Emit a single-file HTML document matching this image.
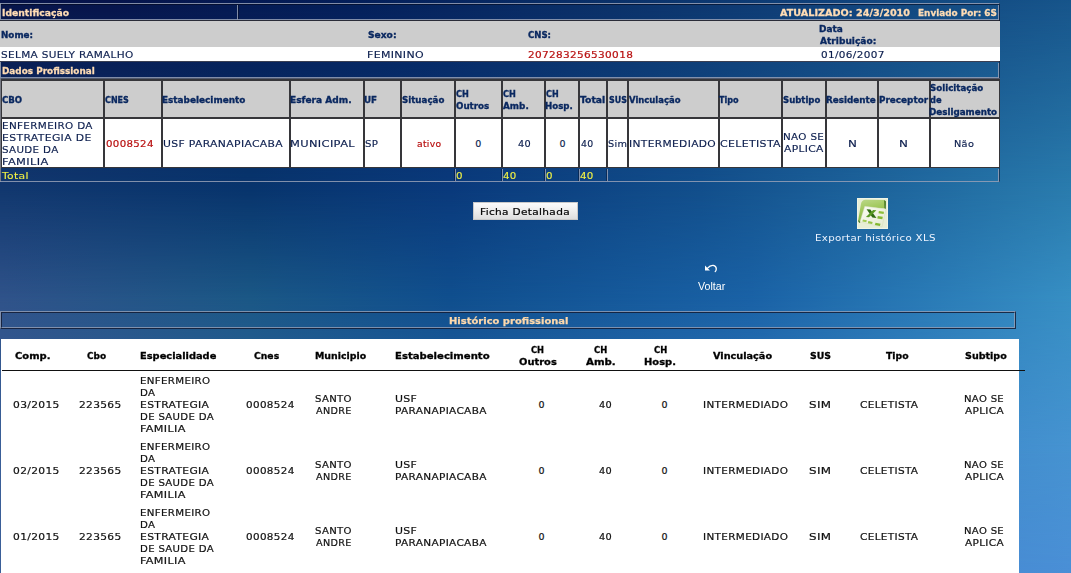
<!DOCTYPE html>
<html lang="pt-BR"><head><meta charset="utf-8"><title>Histórico profissional</title>
<style>
html,body{margin:0;padding:0}
body{width:1071px;height:573px;overflow:hidden;position:relative;background:#0d2f74}
.x{position:absolute;display:block}
.bg{left:0;top:0;width:1071px;height:573px}
.t{position:absolute;white-space:pre;line-height:12px;transform-origin:0 0}
.r{font-family:'DejaVu Sans','Liberation Sans',sans-serif;font-size:9.5px;font-weight:400;color:#0b1d4d;-webkit-text-stroke:0.15px #0b1d4d}
.rr{font-family:'DejaVu Sans','Liberation Sans',sans-serif;font-size:9.5px;font-weight:400;color:#b81010;-webkit-text-stroke:0.2px #b81010}
.ry{font-family:'DejaVu Sans','Liberation Sans',sans-serif;font-size:9.5px;font-weight:400;color:#f2f244;-webkit-text-stroke:0.1px #f2f244}
.rk{font-family:'DejaVu Sans','Liberation Sans',sans-serif;font-size:9.5px;font-weight:400;color:#000;-webkit-text-stroke:0.2px #000}
.rw{font-family:'DejaVu Sans','Liberation Sans',sans-serif;font-size:9.5px;font-weight:400;color:#eef4ff}
.k{font-family:'DejaVu Sans','Liberation Sans',sans-serif;font-size:9.5px;font-weight:400;color:#111;-webkit-text-stroke:0.2px #111}
.ub{font-family:'DejaVu Sans','Liberation Sans',sans-serif;font-size:9.5px;font-weight:700;color:#0a2860;-webkit-text-stroke:0.35px #0a2860}
.up{font-family:'DejaVu Sans','Liberation Sans',sans-serif;font-size:9.5px;font-weight:700;color:#ffdcb4;-webkit-text-stroke:0.3px #ffdcb4}
.lb{font-family:'DejaVu Sans','Liberation Sans',sans-serif;font-size:9.5px;font-weight:700;color:#000;-webkit-text-stroke:0.3px #000}
.lp{font-family:'DejaVu Sans','Liberation Sans',sans-serif;font-size:9.5px;font-weight:700;color:#ffd9ac;-webkit-text-stroke:0.25px #ffd9ac}
.ar{font-family:'Liberation Sans',Arial,sans-serif;font-size:11.5px;font-weight:400;color:#fff}
</style></head><body>
<div class="x bg" style="background:linear-gradient(to right,#07144a 0.00%,#07154c 10.27%,#05205b 33.61%,#0b3169 56.96%,#11437c 79.37%,#17558b 100.00%)"></div>
<div class="x bg" style="background:linear-gradient(to right,#12386f 0.00%,#08356d 23.34%,#0a3a7c 42.02%,#124f8c 65.36%,#2a7cae 100.00%);-webkit-mask-image:linear-gradient(to bottom,transparent 0.00%,#000 33.16%);mask-image:linear-gradient(to bottom,transparent 0.00%,#000 33.16%)"></div>
<div class="x bg" style="background:linear-gradient(to right,#30538a 0.00%,#1b5886 23.34%,#104f8e 42.02%,#1a62a6 70.03%,#378fc4 100.00%);-webkit-mask-image:linear-gradient(to bottom,transparent 33.16%,#000 52.36%);mask-image:linear-gradient(to bottom,transparent 33.16%,#000 52.36%)"></div>
<div class="x bg" style="background:linear-gradient(to right,#3a5f98 0.00%,#2a66a8 42.02%,#357ac0 70.03%,#4693d1 100.00%);-webkit-mask-image:linear-gradient(to bottom,transparent 52.36%,#000 78.53%);mask-image:linear-gradient(to bottom,transparent 52.36%,#000 78.53%)"></div>
<div class="x bg" style="background:linear-gradient(to right,#3a5f98 0.00%,#3f80c8 70.03%,#4a8fd6 100.00%);-webkit-mask-image:linear-gradient(to bottom,transparent 78.53%,#000 100.00%);mask-image:linear-gradient(to bottom,transparent 78.53%,#000 100.00%)"></div>
<div class="x" style="left:0px;top:3px;width:1000px;height:1px;background:rgba(150,160,182,.85);"></div>
<div class="x" style="left:0px;top:3px;width:1px;height:18px;background:rgba(150,158,176,.9);"></div>
<div class="x" style="left:1px;top:4px;width:998px;height:1px;background:rgba(4,8,28,.6);"></div>
<div class="x" style="left:1px;top:19px;width:998px;height:1px;background:rgba(150,160,182,.85);"></div>
<div class="x" style="left:0px;top:20px;width:1000px;height:1px;background:#2a2c38;"></div>
<div class="x" style="left:237px;top:5px;width:1px;height:15px;background:rgba(150,160,182,.85);"></div>
<div class="x" style="left:238px;top:5px;width:1px;height:14px;background:rgba(4,8,28,.5);"></div>
<div class="x" style="left:998px;top:5px;width:1px;height:15px;background:rgba(150,160,182,.85);"></div>
<div class="x" style="left:999px;top:3px;width:1px;height:18px;background:rgba(4,8,28,.5);"></div>
<div class="x" style="left:0px;top:21px;width:1000px;height:26px;background:#cdcdcd;"></div>
<div class="x" style="left:0px;top:47px;width:1000px;height:14px;background:#ffffff;"></div>
<div class="x" style="left:0px;top:61px;width:1000px;height:1px;background:#3a3f52;"></div>
<div class="x" style="left:0px;top:62px;width:1px;height:16px;background:rgba(150,158,176,.9);"></div>
<div class="x" style="left:1px;top:77px;width:998px;height:1px;background:rgba(150,160,182,.85);"></div>
<div class="x" style="left:998px;top:63px;width:1px;height:15px;background:rgba(150,160,182,.85);"></div>
<div class="x" style="left:999px;top:61px;width:1px;height:18px;background:rgba(4,8,28,.5);"></div>
<div class="x" style="left:0px;top:78px;width:1000px;height:1px;background:#50586c;"></div>
<div class="x" style="left:0px;top:79px;width:1000px;height:2px;background:#36363a;"></div>
<div class="x" style="left:0px;top:80px;width:104px;height:39px;background:#36363a;"></div>
<div class="x" style="left:2px;top:81px;width:101px;height:36px;background:#cdcdcd;"></div>
<div class="x" style="left:103px;top:80px;width:59px;height:39px;background:#36363a;"></div>
<div class="x" style="left:105px;top:81px;width:56px;height:36px;background:#cdcdcd;"></div>
<div class="x" style="left:161px;top:80px;width:129px;height:39px;background:#36363a;"></div>
<div class="x" style="left:163px;top:81px;width:126px;height:36px;background:#cdcdcd;"></div>
<div class="x" style="left:289px;top:80px;width:75px;height:39px;background:#36363a;"></div>
<div class="x" style="left:291px;top:81px;width:72px;height:36px;background:#cdcdcd;"></div>
<div class="x" style="left:363px;top:80px;width:38px;height:39px;background:#36363a;"></div>
<div class="x" style="left:365px;top:81px;width:35px;height:36px;background:#cdcdcd;"></div>
<div class="x" style="left:400px;top:80px;width:55px;height:39px;background:#36363a;"></div>
<div class="x" style="left:402px;top:81px;width:52px;height:36px;background:#cdcdcd;"></div>
<div class="x" style="left:454px;top:80px;width:48px;height:39px;background:#36363a;"></div>
<div class="x" style="left:456px;top:81px;width:45px;height:36px;background:#cdcdcd;"></div>
<div class="x" style="left:501px;top:80px;width:44px;height:39px;background:#36363a;"></div>
<div class="x" style="left:503px;top:81px;width:41px;height:36px;background:#cdcdcd;"></div>
<div class="x" style="left:544px;top:80px;width:35px;height:39px;background:#36363a;"></div>
<div class="x" style="left:546px;top:81px;width:32px;height:36px;background:#cdcdcd;"></div>
<div class="x" style="left:578px;top:80px;width:29px;height:39px;background:#36363a;"></div>
<div class="x" style="left:580px;top:81px;width:26px;height:36px;background:#cdcdcd;"></div>
<div class="x" style="left:606px;top:80px;width:22px;height:39px;background:#36363a;"></div>
<div class="x" style="left:608px;top:81px;width:19px;height:36px;background:#cdcdcd;"></div>
<div class="x" style="left:627px;top:80px;width:92px;height:39px;background:#36363a;"></div>
<div class="x" style="left:629px;top:81px;width:89px;height:36px;background:#cdcdcd;"></div>
<div class="x" style="left:718px;top:80px;width:64px;height:39px;background:#36363a;"></div>
<div class="x" style="left:720px;top:81px;width:61px;height:36px;background:#cdcdcd;"></div>
<div class="x" style="left:781px;top:80px;width:45px;height:39px;background:#36363a;"></div>
<div class="x" style="left:783px;top:81px;width:42px;height:36px;background:#cdcdcd;"></div>
<div class="x" style="left:825px;top:80px;width:53px;height:39px;background:#36363a;"></div>
<div class="x" style="left:827px;top:81px;width:50px;height:36px;background:#cdcdcd;"></div>
<div class="x" style="left:877px;top:80px;width:53px;height:39px;background:#36363a;"></div>
<div class="x" style="left:879px;top:81px;width:50px;height:36px;background:#cdcdcd;"></div>
<div class="x" style="left:929px;top:80px;width:71px;height:39px;background:#36363a;"></div>
<div class="x" style="left:931px;top:81px;width:68px;height:36px;background:#cdcdcd;"></div>
<div class="x" style="left:0px;top:118px;width:104px;height:50px;background:#36363a;"></div>
<div class="x" style="left:2px;top:119px;width:101px;height:48px;background:#ffffff;"></div>
<div class="x" style="left:103px;top:118px;width:59px;height:50px;background:#36363a;"></div>
<div class="x" style="left:105px;top:119px;width:56px;height:48px;background:#ffffff;"></div>
<div class="x" style="left:161px;top:118px;width:129px;height:50px;background:#36363a;"></div>
<div class="x" style="left:163px;top:119px;width:126px;height:48px;background:#ffffff;"></div>
<div class="x" style="left:289px;top:118px;width:75px;height:50px;background:#36363a;"></div>
<div class="x" style="left:291px;top:119px;width:72px;height:48px;background:#ffffff;"></div>
<div class="x" style="left:363px;top:118px;width:38px;height:50px;background:#36363a;"></div>
<div class="x" style="left:365px;top:119px;width:35px;height:48px;background:#ffffff;"></div>
<div class="x" style="left:400px;top:118px;width:55px;height:50px;background:#36363a;"></div>
<div class="x" style="left:402px;top:119px;width:52px;height:48px;background:#ffffff;"></div>
<div class="x" style="left:454px;top:118px;width:48px;height:50px;background:#36363a;"></div>
<div class="x" style="left:456px;top:119px;width:45px;height:48px;background:#ffffff;"></div>
<div class="x" style="left:501px;top:118px;width:44px;height:50px;background:#36363a;"></div>
<div class="x" style="left:503px;top:119px;width:41px;height:48px;background:#ffffff;"></div>
<div class="x" style="left:544px;top:118px;width:35px;height:50px;background:#36363a;"></div>
<div class="x" style="left:546px;top:119px;width:32px;height:48px;background:#ffffff;"></div>
<div class="x" style="left:578px;top:118px;width:29px;height:50px;background:#36363a;"></div>
<div class="x" style="left:580px;top:119px;width:26px;height:48px;background:#ffffff;"></div>
<div class="x" style="left:606px;top:118px;width:22px;height:50px;background:#36363a;"></div>
<div class="x" style="left:608px;top:119px;width:19px;height:48px;background:#ffffff;"></div>
<div class="x" style="left:627px;top:118px;width:92px;height:50px;background:#36363a;"></div>
<div class="x" style="left:629px;top:119px;width:89px;height:48px;background:#ffffff;"></div>
<div class="x" style="left:718px;top:118px;width:64px;height:50px;background:#36363a;"></div>
<div class="x" style="left:720px;top:119px;width:61px;height:48px;background:#ffffff;"></div>
<div class="x" style="left:781px;top:118px;width:45px;height:50px;background:#36363a;"></div>
<div class="x" style="left:783px;top:119px;width:42px;height:48px;background:#ffffff;"></div>
<div class="x" style="left:825px;top:118px;width:53px;height:50px;background:#36363a;"></div>
<div class="x" style="left:827px;top:119px;width:50px;height:48px;background:#ffffff;"></div>
<div class="x" style="left:877px;top:118px;width:53px;height:50px;background:#36363a;"></div>
<div class="x" style="left:879px;top:119px;width:50px;height:48px;background:#ffffff;"></div>
<div class="x" style="left:929px;top:118px;width:71px;height:50px;background:#36363a;"></div>
<div class="x" style="left:931px;top:119px;width:68px;height:48px;background:#ffffff;"></div>
<div class="x" style="left:0px;top:78px;width:1px;height:104px;background:#777a84;"></div>
<div class="x" style="left:0px;top:181px;width:1000px;height:1px;background:rgba(150,160,182,.85);"></div>
<div class="x" style="left:455px;top:169px;width:1px;height:12px;background:rgba(150,160,182,.85);"></div>
<div class="x" style="left:454px;top:169px;width:1px;height:12px;background:rgba(4,8,28,.4);"></div>
<div class="x" style="left:502px;top:169px;width:1px;height:12px;background:rgba(150,160,182,.85);"></div>
<div class="x" style="left:501px;top:169px;width:1px;height:12px;background:rgba(4,8,28,.4);"></div>
<div class="x" style="left:545px;top:169px;width:1px;height:12px;background:rgba(150,160,182,.85);"></div>
<div class="x" style="left:544px;top:169px;width:1px;height:12px;background:rgba(4,8,28,.4);"></div>
<div class="x" style="left:579px;top:169px;width:1px;height:12px;background:rgba(150,160,182,.85);"></div>
<div class="x" style="left:578px;top:169px;width:1px;height:12px;background:rgba(4,8,28,.4);"></div>
<div class="x" style="left:607px;top:169px;width:1px;height:12px;background:rgba(150,160,182,.85);"></div>
<div class="x" style="left:606px;top:169px;width:1px;height:12px;background:rgba(4,8,28,.4);"></div>
<div class="x" style="left:998px;top:169px;width:1px;height:12px;background:rgba(150,160,182,.85);"></div>
<div class="x" style="left:999px;top:168px;width:1px;height:14px;background:rgba(4,8,28,.5);"></div>
<div class="x" style="left:473px;top:202px;width:105px;height:18px;box-sizing:border-box;border:1px solid #c9c9c9;background:linear-gradient(#fbfbfb,#efefef 45%,#dedede);"></div>
<svg class="x" style="left:857px;top:198px" width="31" height="31" viewBox="0 0 31 31">
<defs><linearGradient id="g1" x1="0" y1="0" x2="0.25" y2="1"><stop offset="0" stop-color="#bcd98a"/><stop offset=".45" stop-color="#a3c95e"/><stop offset="1" stop-color="#86b53e"/></linearGradient>
<linearGradient id="g2" x1="0" y1="0" x2="1" y2="1"><stop offset="0" stop-color="#fbfcf4"/><stop offset="1" stop-color="#e4ead0"/></linearGradient></defs>
<rect width="31" height="31" fill="#e7eed6"/>
<rect x=".5" y=".5" width="30" height="30" fill="none" stroke="#f1f5e6" stroke-width="1"/>
<path d="M3.9 6.2 Q4.6 1.8 8.6 1.7 L27.2 1.9 L27.4 10.6 L8 9 L3.6 23.6 L1.2 22.2 Z" fill="url(#g1)"/>
<path d="M27.1 1.9 L28.9 3.2 L28.8 11.3 L27.3 10.4 Z" fill="#47791b"/>
<path d="M1.1 22.1 L3.5 23.5 L2.9 25 L1.5 24 Z" fill="#3f6f18"/>
<path d="M7.8 8.3 L28.9 11.1 L25 29 L3 23.7 Z" fill="url(#g2)" stroke="#d3dcba" stroke-width=".5"/>
<path d="M9.6 11.2 L13.4 11.6 L19.4 20 L15.4 19.6 Z" fill="#2f6a12"/>
<path d="M16.2 11.9 L19.4 12.3 L12 19.3 L8.9 18.9 Z" fill="#5a9a22"/>
<path d="M21.9 13 L27 13.7 L26.6 16 L21.5 15.3 Z" fill="#8dbf3a"/>
<path d="M20.8 18 L25.8 18.8 L25.3 21.3 L20.3 20.5 Z" fill="#84b932"/>
<path d="M5.9 21.5 L9.8 22.3 L9.3 24.2 L5.4 23.4 Z" fill="#a3cb55"/>
<path d="M11.4 23.1 L15.6 24 L15.1 26.1 L10.9 25.2 Z" fill="#94c243"/>
<path d="M18.5 24.7 L23.5 25.8 L22.9 28.1 L17.9 27 Z" fill="#82b830"/>
</svg>
<svg class="x" style="left:704px;top:264px" width="14" height="9" viewBox="0 0 14 9">
<path d="M1 1.6 L1 6.6 L6 6.6 L4.1 4.7 Z" fill="#fff"/>
<path d="M3.6 4.2 Q6 1.2 9.2 1.4 Q12.4 2 12.3 5 Q12.2 6.6 11.2 7.6" fill="none" stroke="#fff" stroke-width="1.3" stroke-linecap="round"/>
</svg>
<div class="x" style="left:0;top:311px;width:1016px;height:18px;box-sizing:border-box;border:1px solid;border-color:rgba(150,160,182,.8) rgba(20,28,52,.85) rgba(20,28,52,.85) rgba(150,160,182,.8)"></div>
<div class="x" style="left:1px;top:312px;width:1014px;height:16px;box-sizing:border-box;border:1px solid;border-color:rgba(20,28,52,.85) rgba(150,160,182,.8) rgba(150,160,182,.8) rgba(20,28,52,.85)"></div>
<div class="x" style="left:1px;top:339px;width:1018px;height:240px;background:#ffffff;"></div>
<div class="x" style="left:2px;top:370px;width:1023px;height:1px;background:#111;"></div>
<span class="t up" style="left:2.0px;top:7px;transform:scaleX(0.971)">Identificação</span>
<span class="t up" style="left:780.0px;top:7px;transform:scaleX(1.016)">ATUALIZADO: 24/3/2010</span>
<span class="t up" style="left:917.8px;top:7px;transform:scaleX(0.934)">Enviado Por: 6S</span>
<span class="t ub" style="left:0.6px;top:29px;transform:scaleX(0.924)">Nome:</span>
<span class="t ub" style="left:367.8px;top:29px;transform:scaleX(0.959)">Sexo:</span>
<span class="t ub" style="left:528.0px;top:29px;transform:scaleX(0.900)">CNS:</span>
<span class="t ub" style="left:819.3px;top:23px;transform:scaleX(0.942)">Data</span>
<span class="t ub" style="left:820.2px;top:35px;transform:scaleX(0.953)">Atribuição:</span>
<span class="t r" style="left:0.9px;top:49px;letter-spacing:0.30px;transform:scaleX(1.106)">SELMA SUELY RAMALHO</span>
<span class="t r" style="left:367.2px;top:49px;letter-spacing:0.30px;transform:scaleX(1.154)">FEMININO</span>
<span class="t rr" style="left:527.9px;top:49px;letter-spacing:0.30px;transform:scaleX(1.105)">207283256530018</span>
<span class="t r" style="left:820.5px;top:49px;letter-spacing:0.30px;transform:scaleX(1.102)">01/06/2007</span>
<span class="t up" style="left:2.1px;top:65px;transform:scaleX(0.934)">Dados Profissional</span>
<span class="t ub" style="left:2.1px;top:94px;transform:scaleX(0.905)">CBO</span>
<span class="t ub" style="left:105.0px;top:94px;transform:scaleX(0.843)">CNES</span>
<span class="t ub" style="left:161.7px;top:94px;transform:scaleX(0.936)">Estabelecimento</span>
<span class="t ub" style="left:289.8px;top:94px;transform:scaleX(0.951)">Esfera Adm.</span>
<span class="t ub" style="left:364.1px;top:94px;transform:scaleX(0.923)">UF</span>
<span class="t ub" style="left:402.0px;top:94px;transform:scaleX(0.913)">Situação</span>
<span class="t ub" style="left:455.9px;top:88px;transform:scaleX(0.857)">CH</span>
<span class="t ub" style="left:455.9px;top:100px;transform:scaleX(0.917)">Outros</span>
<span class="t ub" style="left:503.1px;top:88px;transform:scaleX(0.857)">CH</span>
<span class="t ub" style="left:503.1px;top:100px;transform:scaleX(0.933)">Amb.</span>
<span class="t ub" style="left:546.2px;top:88px;transform:scaleX(0.843)">CH</span>
<span class="t ub" style="left:545.1px;top:100px;transform:scaleX(0.910)">Hosp.</span>
<span class="t ub" style="left:580.2px;top:94px;transform:scaleX(0.973)">Total</span>
<span class="t ub" style="left:608.5px;top:94px;transform:scaleX(0.838)">SUS</span>
<span class="t ub" style="left:629.1px;top:94px;transform:scaleX(0.891)">Vinculação</span>
<span class="t ub" style="left:719.4px;top:94px;transform:scaleX(0.852)">Tipo</span>
<span class="t ub" style="left:783.4px;top:94px;transform:scaleX(0.898)">Subtipo</span>
<span class="t ub" style="left:826.1px;top:94px;transform:scaleX(0.926)">Residente</span>
<span class="t ub" style="left:878.5px;top:94px;transform:scaleX(0.931)">Preceptor</span>
<span class="t ub" style="left:929.8px;top:82px;transform:scaleX(0.914)">Solicitação</span>
<span class="t ub" style="left:929.8px;top:94px;transform:scaleX(0.870)">de</span>
<span class="t ub" style="left:928.9px;top:106px;transform:scaleX(0.922)">Desligamento</span>
<span class="t r" style="left:1.7px;top:120px;letter-spacing:0.30px;transform:scaleX(1.096)">ENFERMEIRO DA</span>
<span class="t r" style="left:1.7px;top:132px;letter-spacing:0.30px;transform:scaleX(1.141)">ESTRATEGIA DE</span>
<span class="t r" style="left:1.7px;top:144px;letter-spacing:0.30px;transform:scaleX(1.086)">SAUDE DA</span>
<span class="t r" style="left:1.6px;top:156px;letter-spacing:0.30px;transform:scaleX(1.201)">FAMILIA</span>
<span class="t rr" style="left:105.9px;top:138px;letter-spacing:0.30px;transform:scaleX(1.075)">0008524</span>
<span class="t r" style="left:162.8px;top:138px;letter-spacing:0.30px;transform:scaleX(1.138)">USF PARANAPIACABA</span>
<span class="t r" style="left:290.3px;top:138px;letter-spacing:0.30px;transform:scaleX(1.202)">MUNICIPAL</span>
<span class="t r" style="left:364.8px;top:138px;letter-spacing:0.30px;transform:scaleX(1.071)">SP</span>
<span class="t rr" style="left:416.8px;top:138px;letter-spacing:0.30px;transform:scaleX(0.967)">ativo</span>
<span class="t r" style="left:475.3px;top:138px;letter-spacing:0.30px">0</span>
<span class="t r" style="left:517.7px;top:138px;letter-spacing:0.30px;transform:scaleX(1.024)">40</span>
<span class="t r" style="left:559.6px;top:138px;letter-spacing:0.30px">0</span>
<span class="t r" style="left:581.3px;top:138px;letter-spacing:0.30px;transform:scaleX(0.984)">40</span>
<span class="t r" style="left:608.0px;top:138px;letter-spacing:0.30px;transform:scaleX(1.024)">Sim</span>
<span class="t r" style="left:628.8px;top:138px;letter-spacing:0.30px;transform:scaleX(1.123)">INTERMEDIADO</span>
<span class="t r" style="left:719.9px;top:138px;letter-spacing:0.30px;transform:scaleX(1.153)">CELETISTA</span>
<span class="t r" style="left:783.0px;top:131px;letter-spacing:0.30px;transform:scaleX(1.090)">NAO SE</span>
<span class="t r" style="left:784.1px;top:143px;letter-spacing:0.30px;transform:scaleX(1.124)">APLICA</span>
<span class="t r" style="left:847.5px;top:138px;letter-spacing:0.30px;transform:scaleX(1.250)">N</span>
<span class="t r" style="left:899.1px;top:138px;letter-spacing:0.30px;transform:scaleX(1.250)">N</span>
<span class="t r" style="left:953.8px;top:138px;letter-spacing:0.30px;transform:scaleX(1.027)">Não</span>
<span class="t ry" style="left:2.0px;top:170px;letter-spacing:0.30px;transform:scaleX(1.135)">Total</span>
<span class="t ry" style="left:455.5px;top:170px;letter-spacing:0.30px;transform:scaleX(1.080)">0</span>
<span class="t ry" style="left:502.8px;top:170px;letter-spacing:0.30px;transform:scaleX(1.080)">40</span>
<span class="t ry" style="left:545.6px;top:170px;letter-spacing:0.30px;transform:scaleX(1.080)">0</span>
<span class="t ry" style="left:579.6px;top:170px;letter-spacing:0.30px;transform:scaleX(1.080)">40</span>
<span class="t rk" style="left:480.4px;top:206px;letter-spacing:0.30px;transform:scaleX(1.110)">Ficha Detalhada</span>
<span class="t rw" style="left:814.5px;top:232px;letter-spacing:0.30px;transform:scaleX(1.078)">Exportar histórico XLS</span>
<span class="t ar" style="left:698.0px;top:280px;transform:scaleX(0.924)">Voltar</span>
<span class="t lp" style="left:448.9px;top:315px;transform:scaleX(1.049)">Histórico profissional</span>
<span class="t lb" style="left:14.6px;top:350px;transform:scaleX(1.048)">Comp.</span>
<span class="t lb" style="left:87.0px;top:350px;transform:scaleX(0.945)">Cbo</span>
<span class="t lb" style="left:140.2px;top:350px;transform:scaleX(1.036)">Especialidade</span>
<span class="t lb" style="left:253.9px;top:350px;transform:scaleX(0.973)">Cnes</span>
<span class="t lb" style="left:314.7px;top:350px;transform:scaleX(0.988)">Municipio</span>
<span class="t lb" style="left:394.5px;top:350px;transform:scaleX(1.062)">Estabelecimento</span>
<span class="t lb" style="left:531.1px;top:344px;transform:scaleX(0.873)">CH</span>
<span class="t lb" style="left:518.5px;top:356px;transform:scaleX(1.042)">Outros</span>
<span class="t lb" style="left:593.9px;top:344px;transform:scaleX(0.887)">CH</span>
<span class="t lb" style="left:586.3px;top:356px;transform:scaleX(1.074)">Amb.</span>
<span class="t lb" style="left:653.9px;top:344px;transform:scaleX(0.887)">CH</span>
<span class="t lb" style="left:644.0px;top:356px;transform:scaleX(1.045)">Hosp.</span>
<span class="t lb" style="left:713.1px;top:350px;transform:scaleX(1.021)">Vinculação</span>
<span class="t lb" style="left:809.7px;top:350px;transform:scaleX(0.981)">SUS</span>
<span class="t lb" style="left:886.0px;top:350px;transform:scaleX(0.978)">Tipo</span>
<span class="t lb" style="left:965.0px;top:350px;transform:scaleX(1.005)">Subtipo</span>
<span class="t k" style="left:12.6px;top:399px;letter-spacing:0.30px;transform:scaleX(1.125)">03/2015</span>
<span class="t k" style="left:78.6px;top:399px;letter-spacing:0.30px;transform:scaleX(1.118)">223565</span>
<span class="t k" style="left:140.1px;top:375px;letter-spacing:0.30px;transform:scaleX(1.080)">ENFERMEIRO</span>
<span class="t k" style="left:140.1px;top:387px;letter-spacing:0.30px;transform:scaleX(1.075)">DA</span>
<span class="t k" style="left:140.1px;top:399px;letter-spacing:0.30px;transform:scaleX(1.131)">ESTRATEGIA</span>
<span class="t k" style="left:140.1px;top:411px;letter-spacing:0.30px;transform:scaleX(1.068)">DE SAUDE DA</span>
<span class="t k" style="left:140.0px;top:423px;letter-spacing:0.30px;transform:scaleX(1.180)">FAMILIA</span>
<span class="t k" style="left:246.4px;top:399px;letter-spacing:0.30px;transform:scaleX(1.094)">0008524</span>
<span class="t k" style="left:314.6px;top:393px;letter-spacing:0.30px;transform:scaleX(1.063)">SANTO</span>
<span class="t k" style="left:315.7px;top:405px;letter-spacing:0.30px;transform:scaleX(1.018)">ANDRE</span>
<span class="t k" style="left:394.5px;top:393px;letter-spacing:0.30px;transform:scaleX(1.148)">USF</span>
<span class="t k" style="left:394.5px;top:405px;letter-spacing:0.30px;transform:scaleX(1.107)">PARANAPIACABA</span>
<span class="t k" style="left:538.4px;top:399px;letter-spacing:0.30px">0</span>
<span class="t k" style="left:598.9px;top:399px;letter-spacing:0.30px;transform:scaleX(1.024)">40</span>
<span class="t k" style="left:661.4px;top:399px;letter-spacing:0.30px">0</span>
<span class="t k" style="left:703.2px;top:399px;letter-spacing:0.30px;transform:scaleX(1.100)">INTERMEDIADO</span>
<span class="t k" style="left:808.5px;top:399px;letter-spacing:0.30px;transform:scaleX(1.250)">SIM</span>
<span class="t k" style="left:859.6px;top:399px;letter-spacing:0.30px;transform:scaleX(1.105)">CELETISTA</span>
<span class="t k" style="left:963.9px;top:393px;letter-spacing:0.30px;transform:scaleX(1.060)">NAO SE</span>
<span class="t k" style="left:964.5px;top:405px;letter-spacing:0.30px;transform:scaleX(1.104)">APLICA</span>
<span class="t k" style="left:12.6px;top:465px;letter-spacing:0.30px;transform:scaleX(1.125)">02/2015</span>
<span class="t k" style="left:78.6px;top:465px;letter-spacing:0.30px;transform:scaleX(1.118)">223565</span>
<span class="t k" style="left:140.1px;top:441px;letter-spacing:0.30px;transform:scaleX(1.080)">ENFERMEIRO</span>
<span class="t k" style="left:140.1px;top:453px;letter-spacing:0.30px;transform:scaleX(1.075)">DA</span>
<span class="t k" style="left:140.1px;top:465px;letter-spacing:0.30px;transform:scaleX(1.131)">ESTRATEGIA</span>
<span class="t k" style="left:140.1px;top:477px;letter-spacing:0.30px;transform:scaleX(1.068)">DE SAUDE DA</span>
<span class="t k" style="left:140.0px;top:489px;letter-spacing:0.30px;transform:scaleX(1.180)">FAMILIA</span>
<span class="t k" style="left:246.4px;top:465px;letter-spacing:0.30px;transform:scaleX(1.094)">0008524</span>
<span class="t k" style="left:314.6px;top:459px;letter-spacing:0.30px;transform:scaleX(1.063)">SANTO</span>
<span class="t k" style="left:315.7px;top:471px;letter-spacing:0.30px;transform:scaleX(1.018)">ANDRE</span>
<span class="t k" style="left:394.5px;top:459px;letter-spacing:0.30px;transform:scaleX(1.148)">USF</span>
<span class="t k" style="left:394.5px;top:471px;letter-spacing:0.30px;transform:scaleX(1.107)">PARANAPIACABA</span>
<span class="t k" style="left:538.4px;top:465px;letter-spacing:0.30px">0</span>
<span class="t k" style="left:598.9px;top:465px;letter-spacing:0.30px;transform:scaleX(1.024)">40</span>
<span class="t k" style="left:661.4px;top:465px;letter-spacing:0.30px">0</span>
<span class="t k" style="left:703.2px;top:465px;letter-spacing:0.30px;transform:scaleX(1.100)">INTERMEDIADO</span>
<span class="t k" style="left:808.5px;top:465px;letter-spacing:0.30px;transform:scaleX(1.250)">SIM</span>
<span class="t k" style="left:859.6px;top:465px;letter-spacing:0.30px;transform:scaleX(1.105)">CELETISTA</span>
<span class="t k" style="left:963.9px;top:459px;letter-spacing:0.30px;transform:scaleX(1.060)">NAO SE</span>
<span class="t k" style="left:964.5px;top:471px;letter-spacing:0.30px;transform:scaleX(1.104)">APLICA</span>
<span class="t k" style="left:12.6px;top:531px;letter-spacing:0.30px;transform:scaleX(1.125)">01/2015</span>
<span class="t k" style="left:78.6px;top:531px;letter-spacing:0.30px;transform:scaleX(1.118)">223565</span>
<span class="t k" style="left:140.1px;top:507px;letter-spacing:0.30px;transform:scaleX(1.080)">ENFERMEIRO</span>
<span class="t k" style="left:140.1px;top:519px;letter-spacing:0.30px;transform:scaleX(1.075)">DA</span>
<span class="t k" style="left:140.1px;top:531px;letter-spacing:0.30px;transform:scaleX(1.131)">ESTRATEGIA</span>
<span class="t k" style="left:140.1px;top:543px;letter-spacing:0.30px;transform:scaleX(1.068)">DE SAUDE DA</span>
<span class="t k" style="left:140.0px;top:555px;letter-spacing:0.30px;transform:scaleX(1.180)">FAMILIA</span>
<span class="t k" style="left:246.4px;top:531px;letter-spacing:0.30px;transform:scaleX(1.094)">0008524</span>
<span class="t k" style="left:314.6px;top:525px;letter-spacing:0.30px;transform:scaleX(1.063)">SANTO</span>
<span class="t k" style="left:315.7px;top:537px;letter-spacing:0.30px;transform:scaleX(1.018)">ANDRE</span>
<span class="t k" style="left:394.5px;top:525px;letter-spacing:0.30px;transform:scaleX(1.148)">USF</span>
<span class="t k" style="left:394.5px;top:537px;letter-spacing:0.30px;transform:scaleX(1.107)">PARANAPIACABA</span>
<span class="t k" style="left:538.4px;top:531px;letter-spacing:0.30px">0</span>
<span class="t k" style="left:598.9px;top:531px;letter-spacing:0.30px;transform:scaleX(1.024)">40</span>
<span class="t k" style="left:661.4px;top:531px;letter-spacing:0.30px">0</span>
<span class="t k" style="left:703.2px;top:531px;letter-spacing:0.30px;transform:scaleX(1.100)">INTERMEDIADO</span>
<span class="t k" style="left:808.5px;top:531px;letter-spacing:0.30px;transform:scaleX(1.250)">SIM</span>
<span class="t k" style="left:859.6px;top:531px;letter-spacing:0.30px;transform:scaleX(1.105)">CELETISTA</span>
<span class="t k" style="left:963.9px;top:525px;letter-spacing:0.30px;transform:scaleX(1.060)">NAO SE</span>
<span class="t k" style="left:964.5px;top:537px;letter-spacing:0.30px;transform:scaleX(1.104)">APLICA</span>
</body></html>
